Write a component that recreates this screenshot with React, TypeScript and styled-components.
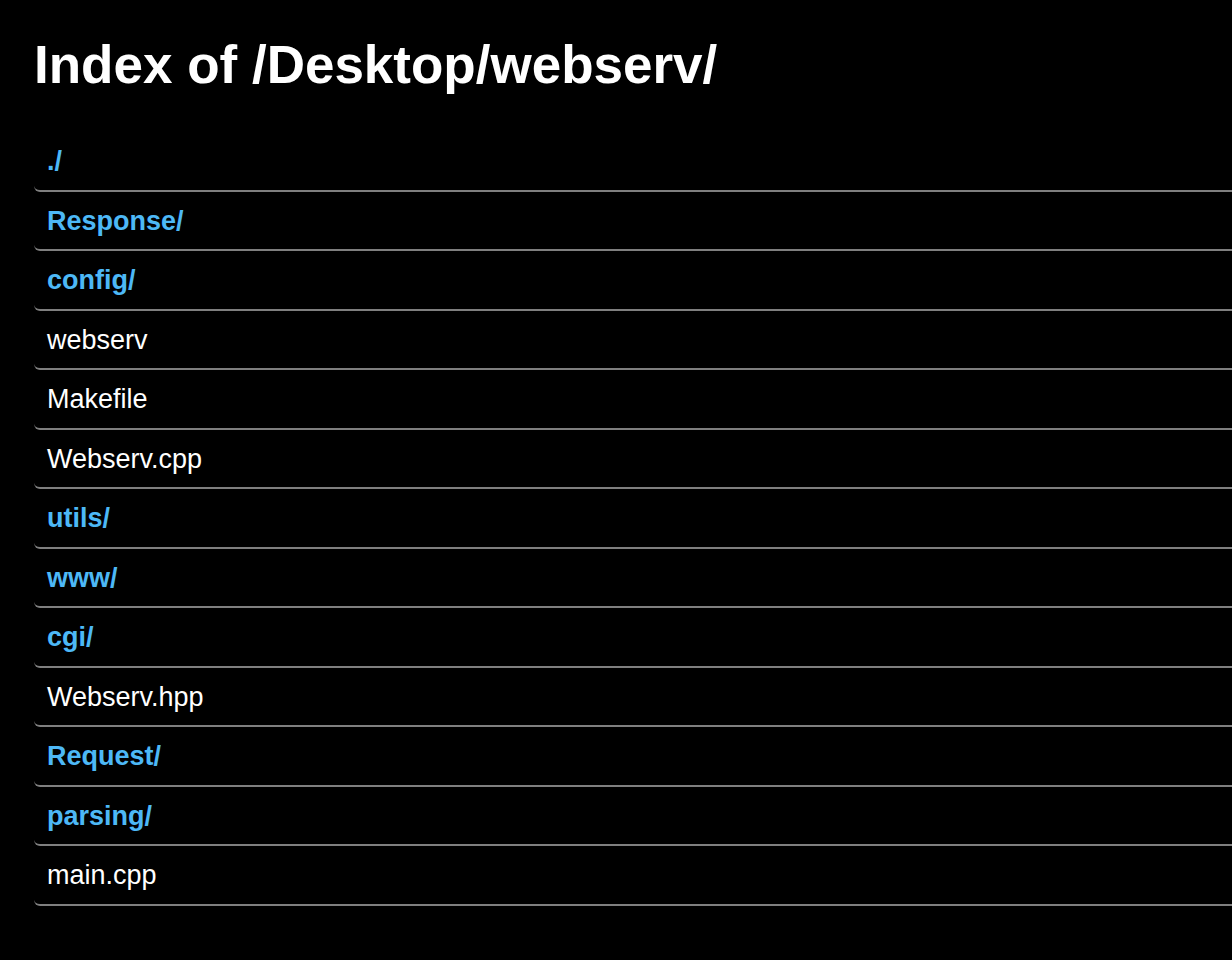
import React from "react";
import styled, { createGlobalStyle } from "styled-components";

const Global = createGlobalStyle`
  html, body {
    margin: 0;
    padding: 0;
    background: #000;
    overflow: hidden;
  }
  body {
    font-family: "Liberation Sans", Arial, Helvetica, sans-serif;
    color: #fff;
  }
`;

const Page = styled.main`
  padding: 34px 0 0 34px;
  min-height: 960px;
  box-sizing: border-box;
  background: #000;
`;

const Title = styled.h1`
  margin: 0 0 37px 0;
  font-size: 53px;
  line-height: 61px;
  font-weight: 700;
  color: #fff;
`;

const List = styled.ul`
  list-style: none;
  margin: 0;
  padding: 0;
  margin-right: -20px;
`;

const Row = styled.li`
  padding: 14px 0 12.5px 13px;
  border-bottom: 2px solid #7f7f7f;
  border-bottom-left-radius: 6px;
  font-size: 27px;
  line-height: 31px;
`;

const Entry = styled.a<{ $dir: boolean }>`
  text-decoration: none;
  color: ${(p) => (p.$dir ? "#4db8f6" : "#ffffff")};
  font-weight: ${(p) => (p.$dir ? 700 : 400)};
`;

const entries = [
  "./",
  "Response/",
  "config/",
  "webserv",
  "Makefile",
  "Webserv.cpp",
  "utils/",
  "www/",
  "cgi/",
  "Webserv.hpp",
  "Request/",
  "parsing/",
  "main.cpp",
];

export default function App() {
  return (
    <>
      <Global />
      <Page>
        <Title>Index of /Desktop/webserv/</Title>
        <List>
          {entries.map((name) => (
            <Row key={name}>
              <Entry href={name} $dir={name.endsWith("/")}>
                {name}
              </Entry>
            </Row>
          ))}
        </List>
      </Page>
    </>
  );
}
